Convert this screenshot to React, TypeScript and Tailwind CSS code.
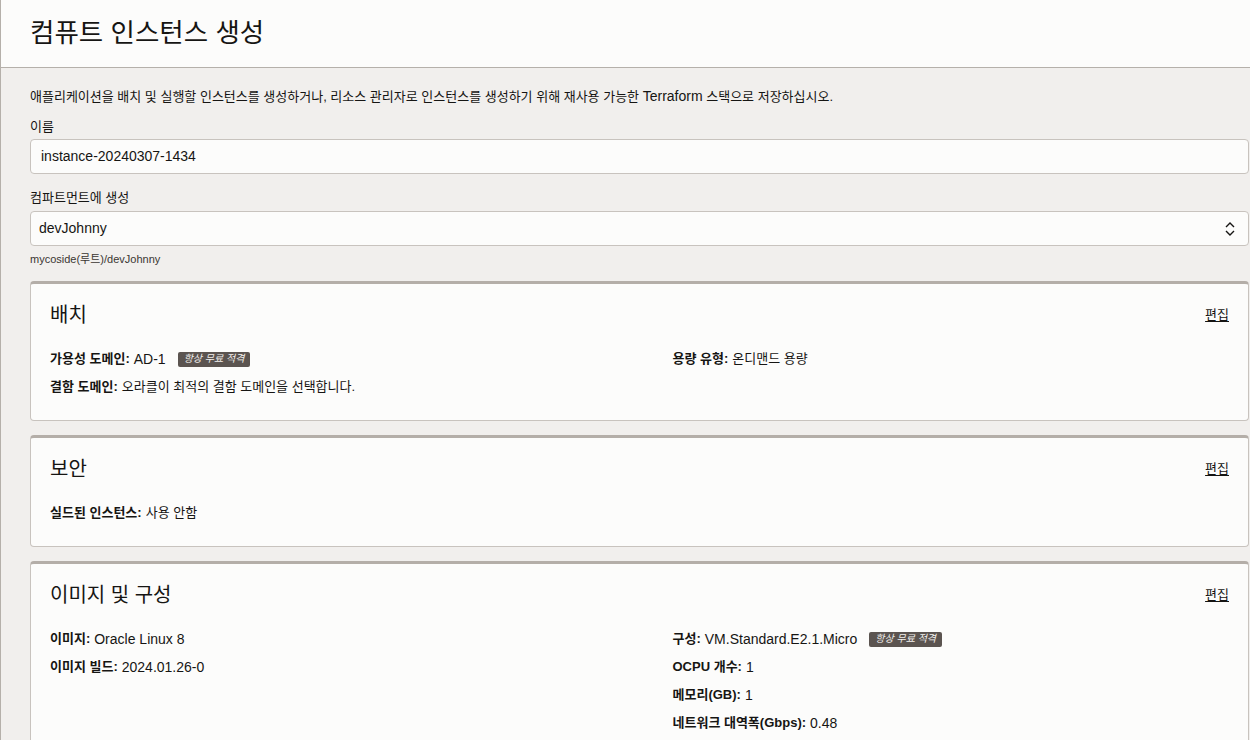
const Badge = () => (
  <span className="ml-3 inline-flex h-[15px] items-center rounded-[2px] bg-[#5b5450] px-[6px] text-[10px] italic leading-none text-[#f3f1ee]">
    항상 무료 적격
  </span>
);

const Field = ({ label, value, badge, latin }: { label: string; value: string; badge?: boolean; latin?: boolean }) => (
  <div className="flex h-[28px] items-center text-[13px] text-[#161513]">
    <span className="font-bold">{label}:</span>
    <span className={latin ? "ml-1 text-[14px]" : "ml-1"}>{value}</span>
    {badge && <Badge />}
  </div>
);

const Card = ({ title, children }: { title: string; children: React.ReactNode }) => (
  <section className="rounded-[4px] border border-t-[3px] border-[#c8c3be] border-t-[#b4aea8] bg-[#fcfcfb] px-[19px] pt-[17px] pb-[19px]">
    <div className="flex items-center justify-between">
      <h2 className="text-[20px] leading-[28px] text-[#161513]">{title}</h2>
      <a className="text-[13px] text-[#161513] underline underline-offset-2">편집</a>
    </div>
    <div className="mt-[16px]">{children}</div>
  </section>
);

export default function App() {
  return (
    <div
      className="h-[740px] overflow-hidden border-l border-[#b5b0aa] bg-[#f1efed]"
      style={{ fontFamily: '"Liberation Sans", "Noto Sans CJK KR", sans-serif' }}
    >
      <header className="flex h-[68px] items-center border-b border-[#b5b0aa] bg-[#fcfcfb] pl-[29px]">
        <h1 className="text-[26.5px] leading-none text-[#161513]">컴퓨트 인스턴스 생성</h1>
      </header>

      <div className="pl-[29px] pr-[1px]">
        <p className="mt-[19px] text-[13px] leading-[18px] text-[#161513]">
          애플리케이션을 배치 및 실행할 인스턴스를 생성하거나, 리소스 관리자로 인스턴스를 생성하기 위해 재사용 가능한{" "}
          <span className="text-[14px]">Terraform</span> 스택으로 저장하십시오.
        </p>

        <label className="mt-[12px] block text-[13px] leading-[18px] text-[#161513]">이름</label>
        <div className="mt-[3px] flex h-[35px] items-center rounded-[4px] border border-[#c8c3be] bg-[#fcfcfb] px-[10px] text-[14px] text-[#161513]">
          instance-20240307-1434
        </div>

        <label className="mt-[15px] block text-[13px] leading-[18px] text-[#161513]">컴파트먼트에 생성</label>
        <div className="mt-[4px] flex h-[35px] items-center justify-between rounded-[4px] border border-[#c8c3be] bg-[#fcfcfb] pl-[8px] pr-[12px] text-[14px] text-[#161513]">
          <span>devJohnny</span>
          <svg width="12" height="16" viewBox="0 0 12 16" fill="none" stroke="#161513" strokeWidth="1.4">
            <path d="M2 6 L6 2 L10 6" />
            <path d="M2 10 L6 14 L10 10" />
          </svg>
        </div>
        <p className="mt-[6px] text-[11px] leading-[14px] text-[#3a3632]">mycoside(루트)/devJohnny</p>

        <div className="mt-[15px] flex flex-col gap-[14px]">
          <Card title="배치">
            <div className="grid grid-cols-2">
              <div>
                <Field label="가용성 도메인" value="AD-1" badge latin />
                <Field label="결함 도메인" value="오라클이 최적의 결함 도메인을 선택합니다." />
              </div>
              <div className="pl-[33px]">
                <Field label="용량 유형" value="온디맨드 용량" />
              </div>
            </div>
          </Card>

          <Card title="보안">
            <Field label="실드된 인스턴스" value="사용 안함" />
          </Card>

          <Card title="이미지 및 구성">
            <div className="grid grid-cols-2">
              <div>
                <Field label="이미지" value="Oracle Linux 8" latin />
                <Field label="이미지 빌드" value="2024.01.26-0" latin />
              </div>
              <div className="pl-[33px]">
                <Field label="구성" value="VM.Standard.E2.1.Micro" badge latin />
                <Field label="OCPU 개수" value="1" latin />
                <Field label="메모리(GB)" value="1" latin />
                <Field label="네트워크 대역폭(Gbps)" value="0.48" latin />
              </div>
            </div>
          </Card>
        </div>
      </div>
    </div>
  );
}
